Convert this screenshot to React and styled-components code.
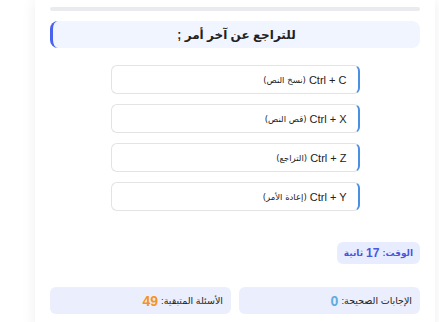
import styled, { createGlobalStyle } from "styled-components";

const GlobalStyle = createGlobalStyle`
  html, body {
    margin: 0;
    padding: 0;
    background: #ffffff;
  }
  body {
    font-family: "Liberation Sans", "DejaVu Sans", Arial, sans-serif;
    color: #222;
  }
`;

const options = [
  { keys: "Ctrl + C", label: "(نسخ النص)" },
  { keys: "Ctrl + X", label: "(قص النص)" },
  { keys: "Ctrl + Z", label: "(التراجع)" },
  { keys: "Ctrl + Y", label: "(إعادة الأمر)" },
];

function App() {
  return (
    <>
      <GlobalStyle />
      <Page dir="rtl">
        <Card>
          <Progress />
          <Question>للتراجع عن آخر أمر ;</Question>
          <OptionList>
            {options.map((o) => (
              <Option key={o.keys}>
                {o.keys} <Hint>{o.label}</Hint>
              </Option>
            ))}
          </OptionList>
          <TimerRow>
            <Timer>
              الوقت: <Big>17</Big> ثانية
            </Timer>
          </TimerRow>
          <Stats>
            <Stat>
              الإجابات الصحيحة: <Num color="#5dade2">0</Num>
            </Stat>
            <Stat>
              الأسئلة المتبقية: <Num color="#f7931e">49</Num>
            </Stat>
          </Stats>
        </Card>
      </Page>
    </>
  );
}

const Page = styled.div`
  padding: 0 4px 0 35px;
  direction: rtl;
`;

const Card = styled.div`
  width: 400px;
  box-sizing: border-box;
  background: #fff;
  padding: 7px 15px 10px;
  box-shadow: 0 0 14px rgba(0, 0, 0, 0.07);
  min-height: 330px;
`;

const Progress = styled.div`
  height: 4px;
  border-radius: 2px;
  background: #e9ebee;
`;

const Question = styled.div`
  margin-top: 10px;
  height: 27px;
  display: flex;
  align-items: center;
  justify-content: center;
  background: #f1f5ff;
  border-left: 3px solid #4a63ee;
  border-radius: 8px;
  font-size: 12px;
  font-weight: bold;
  color: #222;
`;

const OptionList = styled.div`
  margin-top: 17px;
  display: flex;
  flex-direction: column;
  align-items: center;
  gap: 10px;
`;

const Option = styled.div`
  width: 249px;
  height: 29px;
  box-sizing: border-box;
  display: flex;
  align-items: center;
  justify-content: flex-start;
  gap: 3px;
  padding: 0 11px;
  background: #fff;
  border: 1px solid #e3e3e3;
  border-right: 2px solid #4a90e2;
  border-radius: 6px;
  font-size: 11px;
  color: #222;
`;

const Hint = styled.span`
  font-size: 8.5px;
  font-family: "DejaVu Sans", sans-serif;
`;

const TimerRow = styled.div`
  margin-top: 31px;
  display: flex;
`;

const Timer = styled.div`
  height: 22px;
  padding: 0 7px;
  display: flex;
  align-items: center;
  gap: 3px;
  background: #e8ecff;
  border-radius: 6px;
  font-size: 9px;
  font-weight: bold;
  color: #4a56dc;
`;

const Big = styled.span`
  font-size: 12px;
`;

const Stats = styled.div`
  margin-top: 23px;
  display: grid;
  grid-template-columns: 1fr 1fr;
  gap: 8px;
`;

const Stat = styled.div`
  height: 27px;
  padding: 0 8px;
  display: flex;
  align-items: center;
  gap: 3px;
  background: #ebeefc;
  border-radius: 6px;
  font-size: 9.5px;
  color: #222;
`;

const Num = styled.span`
  font-size: 14px;
  font-weight: bold;
  color: ${({ color }) => color};
`;

export default App;
